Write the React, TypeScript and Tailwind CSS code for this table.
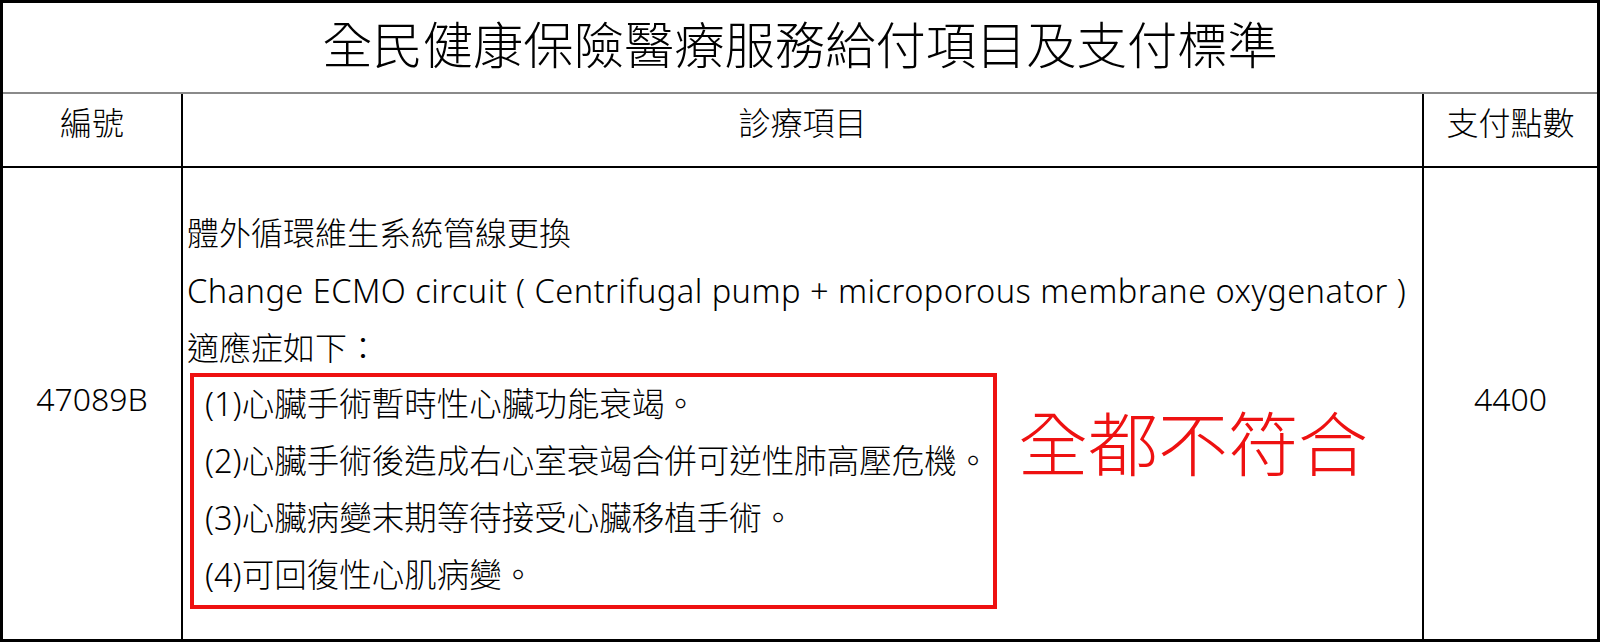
export default function App() {
  const items = [
    "(1)心臟手術暫時性心臟功能衰竭。",
    "(2)心臟手術後造成右心室衰竭合併可逆性肺高壓危機。",
    "(3)心臟病變末期等待接受心臟移植手術。",
    "(4)可回復性心肌病變。",
  ];

  return (
    <div className="w-[1600px] h-[642px] bg-white border-[3px] border-black flex flex-col text-black font-light font-['Noto_Sans','Noto_Sans_CJK_TC',sans-serif]">
      {/* title */}
      <div className="h-[91px] shrink-0 border-b-2 border-[#8a8a8a] flex items-center justify-center pb-[5px] text-[50.3px] leading-none">
        全民健康保險醫療服務給付項目及支付標準
      </div>

      {/* header */}
      <div className="h-[74px] shrink-0 grid grid-cols-[180px_1241px_1fr] border-b-2 border-black text-[32px] leading-none">
        <div className="border-r-2 border-black flex items-center justify-center pb-[14px]">編號</div>
        <div className="border-r-2 border-black flex items-center justify-center pb-[14px]">診療項目</div>
        <div className="flex items-center justify-center pb-[14px]">支付點數</div>
      </div>

      {/* body */}
      <div className="flex-1 grid grid-cols-[180px_1241px_1fr]">
        <div className="border-r-2 border-black flex items-center justify-center pb-[10px] text-[32px] leading-none">
          47089B
        </div>
        <div className="border-r-2 border-black pl-[4px] pt-[36px]">
          <div className="text-[32px] leading-[57.5px] whitespace-nowrap">
            <p>體外循環維生系統管線更換</p>
            <p className="text-[32.6px] tracking-[0.45px]">Change ECMO circuit ( Centrifugal pump + microporous membrane oxygenator )</p>
            <p>適應症如下：</p>
          </div>
          <div className="flex items-start -mt-[4px]">
            <div className="ml-[3px] w-[807px] h-[236px] border-4 border-[#ee1111] pl-[11px]">
              <div className="-mt-[2px] text-[32.5px] leading-[57px] whitespace-nowrap">
                {items.map((t, i) => (
                  <p key={i}>{t}</p>
                ))}
              </div>
            </div>
            <div className="ml-[21px] mt-[36px] text-[70px] leading-none text-[#ee1111] whitespace-nowrap">
              全都不符合
            </div>
          </div>
        </div>
        <div className="flex items-center justify-center pb-[10px] text-[32px] leading-none">4400</div>
      </div>
    </div>
  );
}
